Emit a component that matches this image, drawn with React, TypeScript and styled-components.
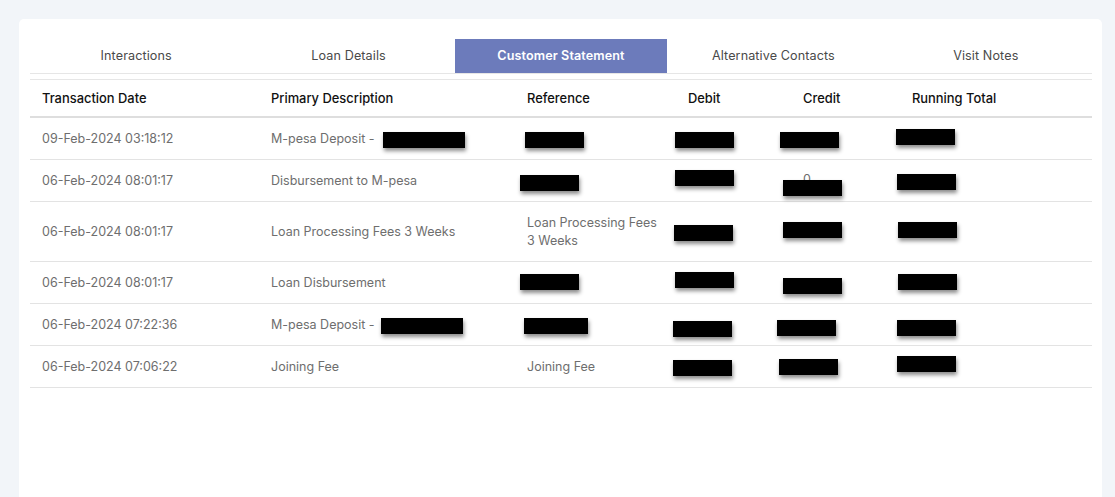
import React from "react";
import styled, { createGlobalStyle } from "styled-components";

const Global = createGlobalStyle`
  html, body { margin: 0; padding: 0; background: #f2f5f9; overflow: hidden; }
  body { font-family: Inter, "Open Sans", "Liberation Sans", sans-serif; }
`;

const Page = styled.div`
  padding: 19px 13px 0 19px;
  height: 497px;
  box-sizing: border-box;
`;

const Card = styled.div`
  background: #ffffff;
  border-radius: 5px;
  padding: 20px 10px 0 11px;
  min-height: 520px;
  box-sizing: border-box;
`;

const TabBar = styled.div`
  display: grid;
  grid-template-columns: repeat(5, 1fr);
  border-bottom: 1px solid #e6e6e6;
`;

const Tab = styled.div<{ $active?: boolean }>`
  height: 34px;
  padding-bottom: 1px;
  box-sizing: border-box;
  display: flex;
  align-items: center;
  justify-content: center;
  font-size: 12.6px;
  letter-spacing: 0.1px;
  font-weight: ${(p) => (p.$active ? 600 : 400)};
  color: ${(p) => (p.$active ? "#ffffff" : "#4a4a4a")};
  background: ${(p) => (p.$active ? "#6c7bbb" : "transparent")};
`;

const Table = styled.table`
  width: 100%;
  margin-top: 5px;
  border-collapse: collapse;
  border-top: 1px solid #e6e6e6;
  table-layout: fixed;
`;

const HeadCell = styled.th`
  text-align: left;
  font-weight: 500;
  font-size: 12.9px;
  color: #111111;
  padding: 10px 12px 8px;
  line-height: 18px;
  border-bottom: 2px solid #dedede;
`;

const Row = styled.tr`
  border-bottom: 1px solid #e3e3e3;
`;

const Cell = styled.td`
  font-size: 12.5px;
  color: #6e6e6e;
  padding: 12px 12px 11px;
  line-height: 18px;
  vertical-align: middle;
  white-space: nowrap;
`;

const WrapCell = styled(Cell)`
  white-space: normal;
`;

const Redact = styled.span<{ $w?: number; $dx?: number; $dy?: number }>`
  display: inline-block;
  position: relative;
  width: ${(p) => p.$w ?? 59}px;
  height: 16px;
  left: ${(p) => p.$dx ?? 0}px;
  top: ${(p) => p.$dy ?? 0}px;
  background: #000000;
  vertical-align: middle;
  box-shadow: 1px 3px 4px rgba(0, 0, 0, 0.45);
`;

const Hidden = styled.span`
  position: relative;
  display: inline-block;
  width: 0;
  top: -1px;
`;

type Box = { w?: number; dx: number; dy: number };
type RowData = {
  date: string;
  desc: string;
  descBox?: Box;
  ref?: string;
  refBox?: Box;
  debit: Box;
  credit: Box;
  creditText?: string;
  running: Box;
};

const rows: RowData[] = [
  {
    date: "09-Feb-2024 03:18:12",
    desc: "M-pesa Deposit - ",
    descBox: { w: 82, dx: 5, dy: 0 },
    refBox: { dx: -2, dy: 0 },
    debit: { dx: -13, dy: 0 },
    credit: { dx: -23, dy: 0 },
    running: { dx: -16, dy: -2.5 },
  },
  {
    date: "06-Feb-2024 08:01:17",
    desc: "Disbursement to M-pesa",
    refBox: { dx: -7, dy: 1.5 },
    debit: { dx: -13, dy: -3.5 },
    credit: { dx: -20, dy: 6.5 },
    creditText: "0",
    running: { dx: -15, dy: 0.5 },
  },
  {
    date: "06-Feb-2024 08:01:17",
    desc: "Loan Processing Fees 3 Weeks",
    ref: "Loan Processing Fees 3 Weeks",
    debit: { dx: -14, dy: 0 },
    credit: { dx: -20, dy: -2.5 },
    running: { dx: -14, dy: -2.5 },
  },
  {
    date: "06-Feb-2024 08:01:17",
    desc: "Loan Disbursement",
    refBox: { dx: -7, dy: -1.5 },
    debit: { dx: -13, dy: -3.5 },
    credit: { dx: -20, dy: 2.5 },
    running: { dx: -14, dy: -1.5 },
  },
  {
    date: "06-Feb-2024 07:22:36",
    desc: "M-pesa Deposit - ",
    descBox: { w: 82, dx: 3, dy: 0 },
    refBox: { w: 64, dx: -3, dy: 0 },
    debit: { dx: -15, dy: 3.5 },
    credit: { dx: -26, dy: 2.5 },
    running: { dx: -15, dy: 2.5 },
  },
  {
    date: "06-Feb-2024 07:06:22",
    desc: "Joining Fee",
    ref: "Joining Fee",
    debit: { dx: -15, dy: 0 },
    credit: { dx: -24, dy: -1 },
    running: { dx: -15, dy: -3.5 },
  },
];

const R = ({ b }: { b: Box }) => <Redact $w={b.w} $dx={b.dx} $dy={b.dy} />;

const tabs = ["Interactions", "Loan Details", "Customer Statement", "Alternative Contacts", "Visit Notes"];

export default function App() {
  return (
    <>
      <Global />
      <Page>
        <Card>
          <TabBar>
            {tabs.map((t) => (
              <Tab key={t} $active={t === "Customer Statement"}>
                {t}
              </Tab>
            ))}
          </TabBar>
          <Table>
            <colgroup>
              <col style={{ width: 229 }} />
              <col style={{ width: 256 }} />
              <col style={{ width: 161 }} />
              <col style={{ width: 115 }} />
              <col style={{ width: 109 }} />
              <col />
            </colgroup>
            <thead>
              <tr>
                <HeadCell>Transaction Date</HeadCell>
                <HeadCell>Primary Description</HeadCell>
                <HeadCell>Reference</HeadCell>
                <HeadCell>Debit</HeadCell>
                <HeadCell>Credit</HeadCell>
                <HeadCell>Running Total</HeadCell>
              </tr>
            </thead>
            <tbody>
              {rows.map((r, i) => (
                <Row key={i}>
                  <Cell>{r.date}</Cell>
                  <Cell>
                    {r.desc}
                    {r.descBox && <R b={r.descBox} />}
                  </Cell>
                  <WrapCell>
                    {r.ref}
                    {r.refBox && <R b={r.refBox} />}
                  </WrapCell>
                  <Cell>
                    <R b={r.debit} />
                  </Cell>
                  <Cell>
                    {r.creditText && <Hidden>{r.creditText}</Hidden>}
                    <R b={r.credit} />
                  </Cell>
                  <Cell>
                    <R b={r.running} />
                  </Cell>
                </Row>
              ))}
            </tbody>
          </Table>
        </Card>
      </Page>
    </>
  );
}
